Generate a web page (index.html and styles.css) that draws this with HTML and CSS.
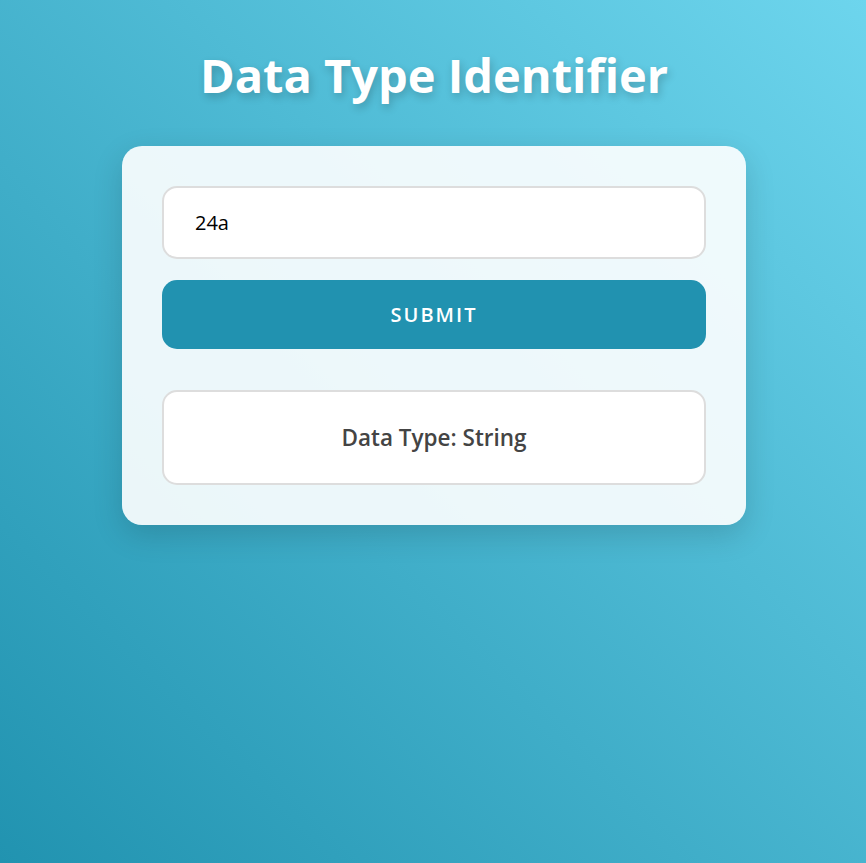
FILE: index.html
```html
<!DOCTYPE html>
<html lang="en">
<head>
<meta charset="utf-8">
<title>Data Type Identifier</title>
<link rel="stylesheet" href="styles.css">
</head>
<body>
<main class="page">
  <h1 class="title">Data Type Identifier</h1>
  <section class="card">
    <input class="field" type="text" value="24a">
    <button class="submit" type="button">Submit</button>
    <div class="result">Data Type: String</div>
  </section>
</main>
</body>
</html>
```
FILE: styles.css
```css
html, body {
  margin: 0;
  height: 100%;
}
body {
  background: linear-gradient(45deg, #2193b0, #6dd5ed);
  font-family: "Open Sans", "Noto Sans", sans-serif;
}
.page {
  display: flex;
  flex-direction: column;
  align-items: center;
  padding: 40px 0 0 2px;
}
.title {
  margin: 0 0 36px;
  color: #fff;
  font-size: 47px;
  font-weight: 700;
  line-height: 70px;
  text-shadow: 2px 4px 8px rgba(0, 0, 0, 0.2);
}
.card {
  box-sizing: border-box;
  width: 624px;
  padding: 40px;
  background: rgba(255, 255, 255, 0.9);
  border-radius: 20px;
  box-shadow: 0 10px 30px rgba(0, 0, 0, 0.15);
  display: flex;
  flex-direction: column;
}
.field {
  box-sizing: border-box;
  height: 73px;
  padding: 0 31px;
  border: 2px solid #ddd;
  border-radius: 15px;
  background: #fff;
  font-family: inherit;
  font-size: 20px;
  color: #000;
  outline: none;
}
.submit {
  margin-top: 21px;
  height: 69px;
  border: none;
  border-radius: 15px;
  background: #2192b0;
  color: #fff;
  font-family: inherit;
  font-size: 20px;
  font-weight: 600;
  letter-spacing: 2px;
  text-transform: uppercase;
}
.result {
  box-sizing: border-box;
  margin-top: 41px;
  height: 95px;
  border: 2px solid #ddd;
  border-radius: 15px;
  background: #fff;
  display: flex;
  align-items: center;
  justify-content: center;
  color: #444;
  font-size: 22.5px;
  font-weight: 600;
}
```
